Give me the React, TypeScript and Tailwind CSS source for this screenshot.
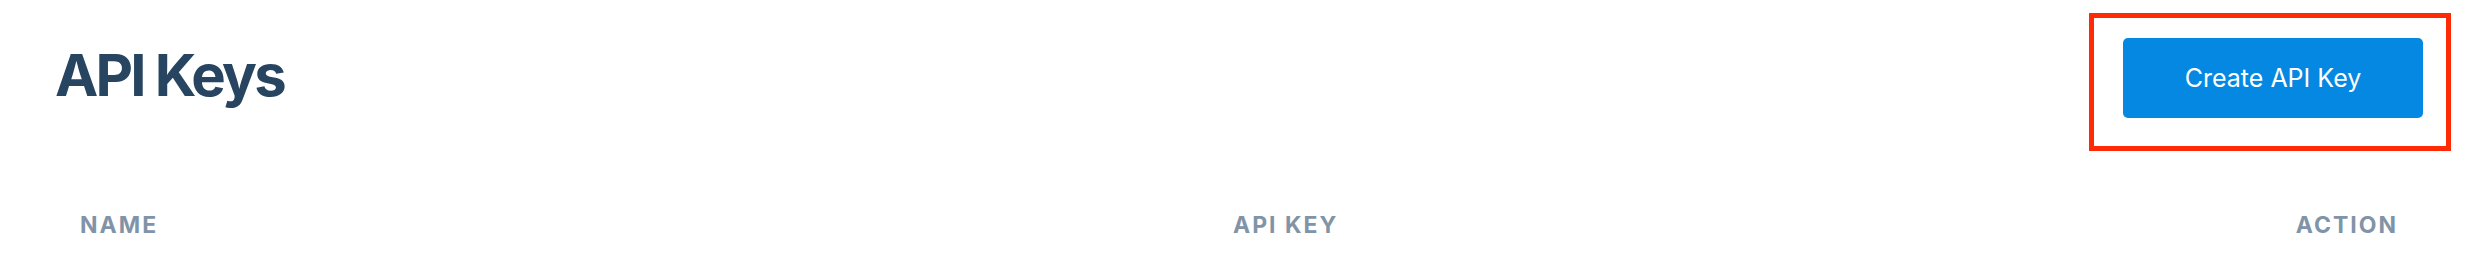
import React from "react";

const columns = [
  { key: "name", label: "NAME", align: "text-left" },
  { key: "apiKey", label: "API KEY", align: "text-left" },
  { key: "action", label: "ACTION", align: "text-right" },
];

function CreateButton() {
  return (
    <div className="relative">
      <button
        type="button"
        className="flex h-[80px] w-[300px] items-center justify-center rounded-[5px] bg-[#0588e2] pt-[1px] text-[25px] leading-none text-white"
      >
        Create API Key
      </button>
      {/* highlight around the primary action */}
      <div className="pointer-events-none absolute -left-[34px] -top-[25px] -right-[28px] -bottom-[33px] border-[5px] border-[#ff2b06]" />
    </div>
  );
}

export default function App() {
  return (
    <div className="min-h-[268px] w-full bg-white px-[55px] pt-[38px] font-['Inter','Liberation_Sans',sans-serif]">
      <div className="flex items-start justify-between">
        <h1 className="mt-[8px] text-[58px] font-bold leading-none tracking-[-2.8px] text-[#274560]">
          API Keys
        </h1>
        <CreateButton />
      </div>

      <div className="mt-[96px] grid grid-cols-[1153px_1fr_auto]">
        {columns.map((col) => (
          <div
            key={col.key}
            className={`px-[25px] text-[23px] font-bold leading-none tracking-[2px] text-[#8194a7] ${col.align}`}
          >
            {col.label}
          </div>
        ))}
      </div>
    </div>
  );
}
